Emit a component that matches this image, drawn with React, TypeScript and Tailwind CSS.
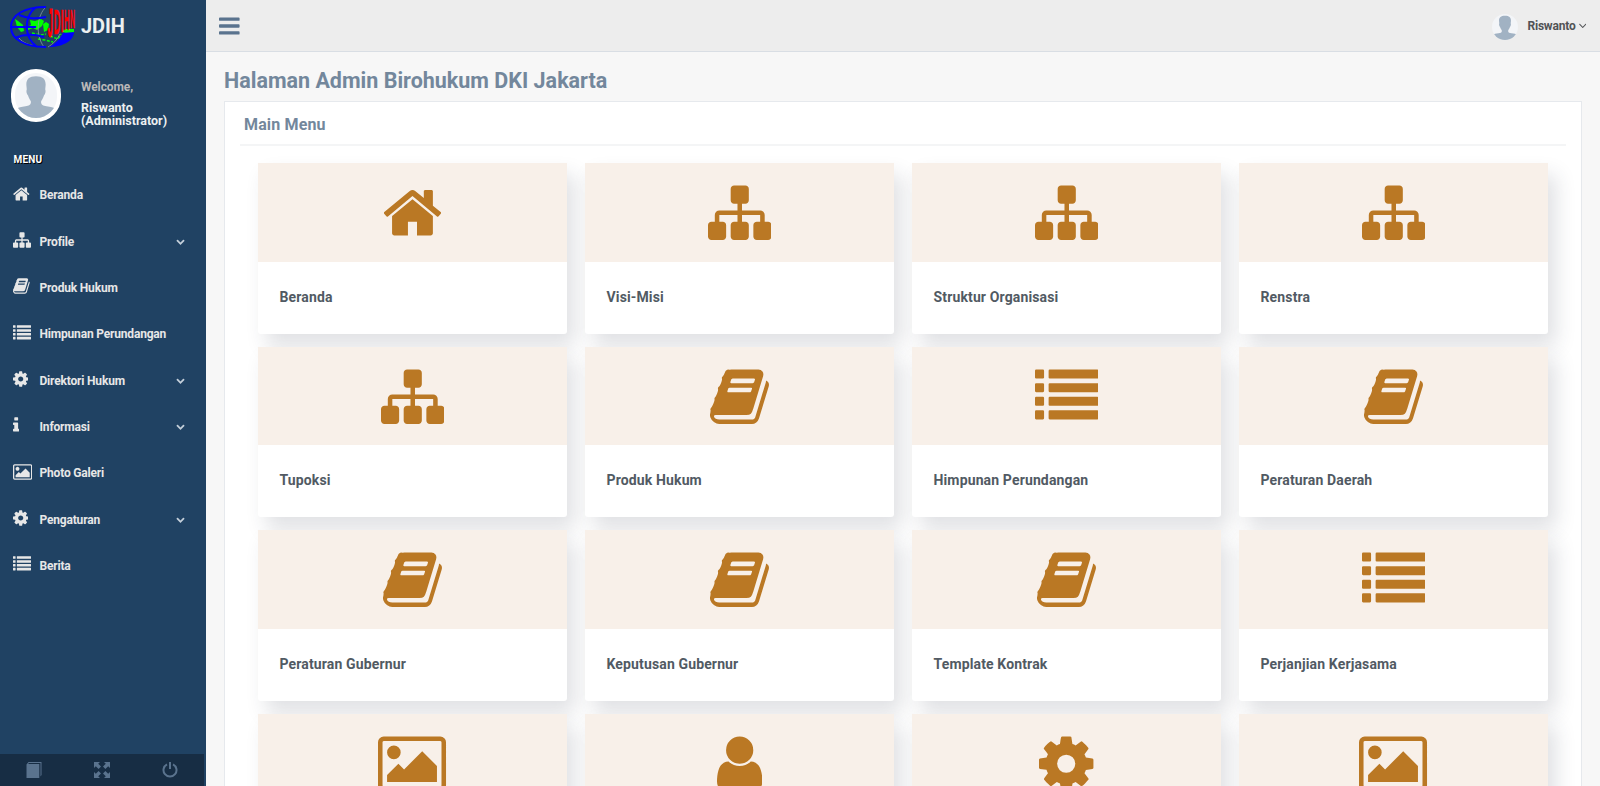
import React from "react";

type Shape = { box: string; d: string };

const bar = (x: number, y: number, w: number, h: number, r: number) =>
  `M${x + r} ${y}h${w - 2 * r}a${r} ${r} 0 0 1 ${r} ${r}v${h - 2 * r}a${r} ${r} 0 0 1 -${r} ${r}h-${w - 2 * r}a${r} ${r} 0 0 1 -${r} -${r}v-${h - 2 * r}a${r} ${r} 0 0 1 ${r} -${r}z`;

const shapes = {
  home: {
    box: "64 0 1664 1792",
    d: "M1472 992v480q0 26-19 45t-45 19h-384v-384h-256v384h-384q-26 0-45-19t-19-45v-480q0-1 .5-3t.5-3l575-474 575 474q1 2 1 6zm223-69l-62 74q-8 9-21 11h-3q-13 0-21-7l-692-577-692 577q-12 8-24 7-13-2-21-11l-62-74q-8-10-7-23.5t11-21.5l719-599q32-26 76-26t76 26l244 204v-195q0-14 9-23t23-9h192q14 0 23 9t9 23v408l219 182q10 8 11 21.5t-7 23.5z",
  },
  sitemap: {
    box: "0 0 1792 1792",
    d: "M1792 1248v320q0 40-28 68t-68 28h-320q-40 0-68-28t-28-68v-320q0-40 28-68t68-28h96v-192h-512v192h96q40 0 68 28t28 68v320q0 40-28 68t-68 28h-320q-40 0-68-28t-28-68v-320q0-40 28-68t68-28h96v-192h-512v192h96q40 0 68 28t28 68v320q0 40-28 68t-68 28h-320q-40 0-68-28t-28-68v-320q0-40 28-68t68-28h96v-192q0-52 38-90t90-38h512v-192h-96q-40 0-68-28t-28-68v-320q0-40 28-68t68-28h320q40 0 68 28t28 68v320q0 40-28 68t-68 28h-96v192h512q52 0 90 38t38 90v192h96q40 0 68 28t28 68z",
  },
  book: {
    box: "64 0 1664 1792",
    d: "M1703 478q40 57 18 129l-275 906q-19 64-76.5 107.5t-122.5 43.5h-923q-77 0-148.5-53.5t-99.5-131.5q-24-67-2-127 0-4 3-27t4-37q1-8-3-21.5t-3-19.5q2-11 8-21t16.5-23.5 16.5-23.5q23-38 45-91.5t30-91.5q3-10 .5-30t-.5-28q3-11 17-28t17-23q21-36 42-92t25-90q1-9-2.5-32t.5-28q4-13 22-30.5t22-22.5q19-26 42.5-84.5t27.5-96.5q1-8-3-25.5t-2-26.5q2-8 9-18t18-23 17-21q8-12 16.5-30.5t15-35 16-36 19.5-32 26.5-23.5 36-11.5 47.5 5.5l-1 3q38-9 51-9h761q74 0 114 56t18 130l-274 906q-36 119-71.5 153.5t-128.5 34.5h-869q-27 0-38 15-11 16-1 43 24 70 144 70h923q29 0 56-15.5t35-41.5l300-987q7-22 5-57 38 15 59 43zm-1064 2q-4 13 2 22.5t20 9.5h608q13 0 25.5-9.5t16.5-22.5l21-64q4-13-2-22.5t-20-9.5h-608q-13 0-25.5 9.5t-16.5 22.5zm-83 256q-4 13 2 22.5t20 9.5h608q13 0 25.5-9.5t16.5-22.5l21-64q4-13-2-22.5t-20-9.5h-608q-13 0-25.5 9.5t-16.5 22.5z",
  },
  list: {
    box: "0 0 1792 1792",
    d: [128, 512, 896, 1280].map((y) => bar(0, y, 256, 256, 32) + bar(384, y, 1408, 256, 32)).join(""),
  },
  cog: {
    box: "128 0 1536 1792",
    d: "M1152 896q0-106-75-181t-181-75-181 75-75 181 75 181 181 75 181-75 75-181zm512-109v222q0 12-8 23t-20 13l-185 28q-19 54-39 91 35 50 107 138 10 12 10 25t-9 23q-27 37-99 108t-94 71q-12 0-26-9l-138-108q-44 23-91 38-16 136-29 186-7 28-36 28h-222q-14 0-24.5-8.5t-11.5-21.5l-28-184q-49-16-90-37l-141 107q-10 9-25 9-14 0-25-11-126-114-165-168-7-10-7-23 0-12 8-23 15-21 51-66.5t54-70.5q-27-50-41-99l-183-27q-13-2-21-12.5t-8-23.5v-222q0-12 8-23t19-13l186-28q14-46 39-92-40-57-107-138-10-12-10-24 0-10 9-23 26-36 98.5-107.5t94.5-71.5q13 0 26 10l138 107q44-23 91-38 16-136 29-186 7-28 36-28h222q14 0 24.5 8.5t11.5 21.5l28 184q49 16 90 37l142-107q9-9 24-9 13 0 25 10 129 119 165 170 7 8 7 22 0 12-8 23-15 21-51 66.5t-54 70.5q26 50 41 98l183 28q13 2 21 12.5t8 23.5z",
  },
  info: {
    box: "576 0 640 1792",
    d: "M1216 1344v128q0 26-19 45t-45 19h-512q-26 0-45-19t-19-45v-128q0-26 19-45t45-19h64v-384h-64q-26 0-45-19t-19-45v-128q0-26 19-45t45-19h384q26 0 45 19t19 45v576h64q26 0 45 19t19 45zm-128-1152v192q0 26-19 45t-45 19h-256q-26 0-45-19t-19-45v-192q0-26 19-45t45-19h256q26 0 45 19t19 45z",
  },
  image: {
    box: "-64 0 1920 1792",
    d: "M576 576q0 80-56 136t-136 56-136-56-56-136 56-136 136-56 136 56 56 136zm1024 384v448h-1408v-192l320-320 160 160 512-512zm96-704h-1600q-13 0-22.5 9.5t-9.5 22.5v1216q0 13 9.5 22.5t22.5 9.5h1600q13 0 22.5-9.5t9.5-22.5v-1216q0-13-9.5-22.5t-22.5-9.5zm160 32v1216q0 66-47 113t-113 47h-1600q-66 0-113-47t-47-113v-1216q0-66 47-113t113-47h1600q66 0 113 47t47 113z",
  },
  user: {
    box: "256 0 1280 1792",
    d: "M1536 1399q0 109-62.5 187t-150.5 78h-854q-88 0-150.5-78t-62.5-187q0-85 8.5-160.5t31.5-152 58.5-131 94-89 134.5-34.5q131 128 313 128t313-128q76 0 134.5 34.5t94 89 58.5 131 31.5 152 8.5 160.5zm-256-887q0 159-112.5 271.5t-271.5 112.5-271.5-112.5-112.5-271.5 112.5-271.5 271.5-112.5 271.5 112.5 112.5 271.5z",
  },
  bars: {
    box: "128 0 1536 1792",
    d: [256, 768, 1280].map((y) => bar(128, y, 1536, 256, 64)).join(""),
  },
  chevron: {
    box: "0 0 1792 1792",
    d: "M1683 808l-742 741q-19 19-45 19t-45-19l-742-741q-19-19-19-45.5t19-45.5l166-165q19-19 45-19t45 19l531 531 531-531q19-19 45-19t45 19l166 165q19 19 19 45.5t-19 45.5z",
  },
  angle: {
    box: "384 0 1024 1792",
    d: "M1395 736q0 13-10 23l-466 466q-10 10-23 10t-23-10l-466-466q-10-10-10-23t10-23l50-50q10-10 23-10t23 10l393 393 393-393q10-10 23-10t23 10l50 50q10 10 10 23z",
  },
} satisfies Record<string, Shape>;

type IconName = keyof typeof shapes;

function Icon({ name, className }: { name: IconName; className: string }) {
  return (
    <svg viewBox={shapes[name].box} className={className} fill="currentColor" aria-hidden="true">
      <path d={shapes[name].d} />
    </svg>
  );
}

function Avatar({ className }: { className: string }) {
  return (
    <svg viewBox="0 0 100 100" preserveAspectRatio="none" className={className} aria-hidden="true">
      <rect width="100" height="100" fill="#f3f5f8" />
      <path
        fill="#a1b2c3"
        d="M50 7C66 7 73 13 73 26L72 36C74 41 72 47 69 50C67 57 63 60 62 64C62 71 67 73 75 74C85 75 92 77 98 80V100H2V80C8 77 15 75 25 74C33 73 38 71 38 64C37 60 33 57 31 50C28 47 26 41 28 36L27 26C27 13 34 7 50 7z"
      />
    </svg>
  );
}

function Logo() {
  return (
    <svg viewBox="0 0 66 44" className="h-11 w-[66px] shrink-0 overflow-visible" aria-hidden="true">
      <path fill="#00ff00" d="M5 14l3 2 5 4 1 6-3 1-4-5zM20 15l5 1 6-2 3 2-2 5-5 4-4-2-5 2-1-3 4-2zM33 19l3-2 3 2-1 6-4 2zM54 24h10v4h-8l-3-1z" />
      <path fill="none" stroke="#00ff00" strokeWidth="1.5" strokeDasharray="3 1.500" d="M22 28l8 2 6-1M28 34l7 1 8 2M40 31l8 3 3-5M47 38l5-3" />
      <g fill="none" stroke="#8b98a3" strokeWidth="0.8">
        <path d="M36 2c-9 8-11 28-2 40M38 42c5-3 9-7 12-13M9 33c4 5 10 7 17 8" />
      </g>
      <g fill="none" stroke="#0000ff" strokeWidth="2">
        <path d="M36 2C14 2 1 10 1 22s13 20 35 20M26 2C14 12 13 31 27 42M9 10c10 4 17 4 27 2M2 22h24M5 33c9-4 19-4 29-1" />
      </g>
      <path fill="#0000ff" d="M64 27c0 8-10 15-25 15 6-3 11-8 14-14z" />
      <g fill="#ff0000" stroke="#ff0000" strokeWidth="0.2" className="font-['Liberation_Sans'] text-[10px] font-bold">
        <text transform="translate(37.500 32) scale(1 4)" textLength="5.500" lengthAdjust="spacingAndGlyphs">J</text>
        <text transform="translate(43.800 29) scale(1 3.600)" textLength="6.500" lengthAdjust="spacingAndGlyphs">D</text>
        <text transform="translate(50.800 27) scale(1 3.200)" textLength="2.800" lengthAdjust="spacingAndGlyphs">I</text>
        <text transform="translate(54 25) scale(1 2.900)" textLength="5.500" lengthAdjust="spacingAndGlyphs">H</text>
        <text transform="translate(60 23) scale(1 2.500)" textLength="5" lengthAdjust="spacingAndGlyphs">N</text>
      </g>
    </svg>
  );
}

const menu: { label: string; icon: IconName; size: string; open?: boolean }[] = [
  { label: "Beranda", icon: "home", size: "w-[16.7px]" },
  { label: "Profile", icon: "sitemap", size: "w-[18px]", open: true },
  { label: "Produk Hukum", icon: "book", size: "w-[16.7px]" },
  { label: "Himpunan Perundangan", icon: "list", size: "w-[18px]" },
  { label: "Direktori Hukum", icon: "cog", size: "w-[15.4px]", open: true },
  { label: "Informasi", icon: "info", size: "w-[6.4px]", open: true },
  { label: "Photo Galeri", icon: "image", size: "w-[19.3px]" },
  { label: "Pengaturan", icon: "cog", size: "w-[15.4px]", open: true },
  { label: "Berita", icon: "list", size: "w-[18px]" },
];

const cards: { label?: string; icon: IconName }[] = [
  { label: "Beranda", icon: "home" },
  { label: "Visi-Misi", icon: "sitemap" },
  { label: "Struktur Organisasi", icon: "sitemap" },
  { label: "Renstra", icon: "sitemap" },
  { label: "Tupoksi", icon: "sitemap" },
  { label: "Produk Hukum", icon: "book" },
  { label: "Himpunan Perundangan", icon: "list" },
  { label: "Peraturan Daerah", icon: "book" },
  { label: "Peraturan Gubernur", icon: "book" },
  { label: "Keputusan Gubernur", icon: "book" },
  { label: "Template Kontrak", icon: "book" },
  { label: "Perjanjian Kerjasama", icon: "list" },
  { icon: "image" },
  { icon: "user" },
  { icon: "cog" },
  { icon: "image" },
];

function Sidebar() {
  return (
    <aside className="flex h-full w-[206px] shrink-0 flex-col bg-[#204263] text-[#e7e7e7]">
      <div className="flex h-[52px] items-start pt-[5px] pl-[10px]">
        <Logo />
        <span className="pt-[7px] pl-[5px] text-[20px] leading-[29px] font-bold tracking-[-0.1px] text-[#ecf0f1]">JDIH</span>
      </div>
      <div className="flex pt-[17px] pl-[11px]">
        <Avatar className="h-[53px] w-[50px] rounded-full border-4 border-white bg-white" />
        <div className="pt-[10px] pl-[20px] font-bold">
          <p className="text-[12px] leading-[16px] tracking-[-0.1px] text-[#bab8b8]">Welcome,</p>
          <p className="pt-[6px] text-[12.5px] leading-[13px] text-[#ecf0f1]">
            Riswanto
            <br />
            (Administrator)
          </p>
        </div>
      </div>
      <h3 className="mt-[25px] pl-[13.5px] text-[10px] leading-4 font-bold tracking-[0.2px] text-white [text-shadow:1px_1px_#000]">MENU</h3>
      <nav className="mt-[4px] flex flex-col">
        {menu.map((item) => (
          <a key={item.label} className="flex h-[46.35px] items-center pr-[21px] pl-[13px]">
            <span className="flex w-[26.5px] shrink-0">
              <Icon name={item.icon} className={`mt-[-3px] h-[18px] ${item.size}`} />
            </span>
            <span className="grow text-[12px] font-bold tracking-[-0.18px] whitespace-nowrap">{item.label}</span>
            {item.open && <Icon name="chevron" className="size-[9px] text-[#c4cfda]" />}
          </a>
        ))}
      </nav>
      <div className="mt-auto flex h-8 w-[204px] items-center bg-[#172d44] text-[#5a738e]">
        <span className="flex w-[68px] justify-center">
          <svg viewBox="0 0 16 16" className="size-4" fill="currentColor">
            <path d="M2.500 0H15.500v13l-1 1.500V1H3l-1 1h11.300v14H.500V2.500z" />
          </svg>
        </span>
        <span className="flex w-[68px] justify-center">
          <svg viewBox="0 0 16 16" className="size-4" fill="currentColor">
            <path d="M0 0h6L4.200 1.800 7 4.600 4.600 7 1.800 4.200 0 6zM16 0v6l-1.800-1.800L11.400 7 9 4.600l2.800-2.800L10 0zM0 16v-6l1.800 1.800L4.600 9 7 11.400l-2.800 2.800L6 16zM16 16h-6l1.800-1.800L9 11.400 11.400 9l2.800 2.800L16 10z" />
          </svg>
        </span>
        <span className="flex w-[68px] justify-center">
          <svg viewBox="0 0 16 16" className="size-4" fill="none" stroke="currentColor" strokeWidth="2">
            <path d="M5 2.300a6.500 6.500 0 1 0 6 0M8 0v7" />
          </svg>
        </span>
      </div>
    </aside>
  );
}

export default function App() {
  return (
    <div className="flex h-[786px] w-[1600px] overflow-hidden bg-[#f7f7f7] font-[Roboto,sans-serif]">
      <Sidebar />
      <div className="flex min-w-0 grow flex-col">
        <header className="flex h-[52px] shrink-0 items-center justify-between border-b border-[#d9dee4] bg-[#ededed] pr-[14px] pl-[13px]">
          <Icon name="bars" className="h-6 w-[20.6px] text-[#5a738e]" />
          <div className="flex items-center">
            <Avatar className="mt-[2px] size-[26px] rounded-full" />
            <span className="pl-[9px] text-[12px] font-bold tracking-[-0.2px] text-[#515356]">Riswanto</span>
            <Icon name="angle" className="ml-[3px] h-[13px] w-[7.500px] text-[#515356]" />
          </div>
        </header>
        <main className="flex min-h-0 grow flex-col pr-[18px] pl-[18px] text-[#73879c]">
          <h1 className="shrink-0 pt-[14px] text-[21.5px] leading-[30px] font-bold">Halaman Admin Birohukum DKI Jakarta</h1>
          <section className="mt-[5px] h-[900px] shrink-0 border border-[#e6e9ed] bg-white px-[15px]">
            <h2 className="h-[44px] border-b-2 border-[#f4f5f6] pt-[12px] pl-1 text-[16px] leading-[22px] font-bold tracking-[0.15px]">Main Menu</h2>
            <div className="mt-[17px] ml-[18px] grid grid-cols-[repeat(4,309px)] gap-x-[18px] gap-y-[13px]">
              {cards.map((card, index) => (
                <article
                  key={index}
                  className="h-[170.5px] overflow-hidden rounded-b-[3px] bg-white shadow-[8px_12px_20px_rgba(39,50,66,0.145)]"
                >
                  <div className="flex h-[98.5px] items-center justify-center bg-[#f8f0e9] text-[#ba7824]">
                    <Icon name={card.icon} className="mt-px h-[63.5px] w-auto" />
                  </div>
                  {card.label && (
                    <h3 className="pt-[25px] pl-[21.5px] text-[14px] leading-5 font-bold tracking-[0.14px] text-[#515a63]">
                      {card.label}
                    </h3>
                  )}
                </article>
              ))}
            </div>
          </section>
        </main>
      </div>
    </div>
  );
}
